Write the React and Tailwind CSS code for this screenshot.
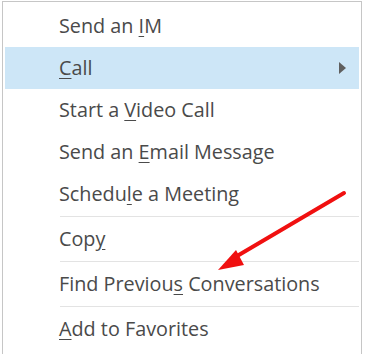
const items = [
  { label: ['Send an ', 'I', 'M'] },
  { label: ['', 'C', 'all'], active: true, sub: true },
  { label: ['Start a ', 'V', 'ideo Call'] },
  { label: ['Send an ', 'E', 'mail Message'] },
  { label: ['Schedu', 'l', 'e a Meeting'], sep: true },
  { label: ['Cop', 'y', ''], sep: true },
  { label: ['Find Previou', 's', ' Conversations'], sep: true },
  { label: ['', 'A', 'dd to Favorites'] },
]

function Item({ label, active, sub }) {
  const [pre, key, post] = label
  return (
    <div
      className={`flex h-[42px] items-center justify-between pl-[54px] pr-[13px] ${
        active ? 'bg-[#cde6f7]' : ''
      }`}
    >
      <span className="text-[19.8px] leading-none text-[#4a4a4a]">
        {pre}
        <u className="underline-offset-[3px]">{key}</u>
        {post}
      </span>
      {sub && (
        <svg width="7" height="12" viewBox="0 0 7 12">
          <path d="M0 0 L7 6 L0 12 Z" fill="#5f5f5f" />
        </svg>
      )}
    </div>
  )
}

export default function App() {
  return (
    <div
      className="relative h-[360px] w-[366px] overflow-hidden bg-white pt-[1px] pl-[2px]"
      style={{ fontFamily: '"Open Sans", "Noto Sans", sans-serif' }}
    >
      <div className="h-[353px] w-[360px] border-x border-t border-[#c6c6c6] px-[2px] pt-[3px]">
        {items.map((it, i) => (
          <div key={i}>
            <Item {...it} />
            {it.sep && <div className="my-[1px] ml-[55px] h-px bg-[#e3e3e3]" />}
          </div>
        ))}
      </div>

      {/* red pointer arrow */}
      <svg className="absolute left-0 top-0" width="366" height="360" viewBox="0 0 366 360">
        <line x1="344" y1="193" x2="232" y2="259" stroke="#f01010" strokeWidth="4" strokeLinecap="round" />
        <path d="M218 270 L236 250 L244 265 Z" fill="#f01010" />
      </svg>
    </div>
  )
}
